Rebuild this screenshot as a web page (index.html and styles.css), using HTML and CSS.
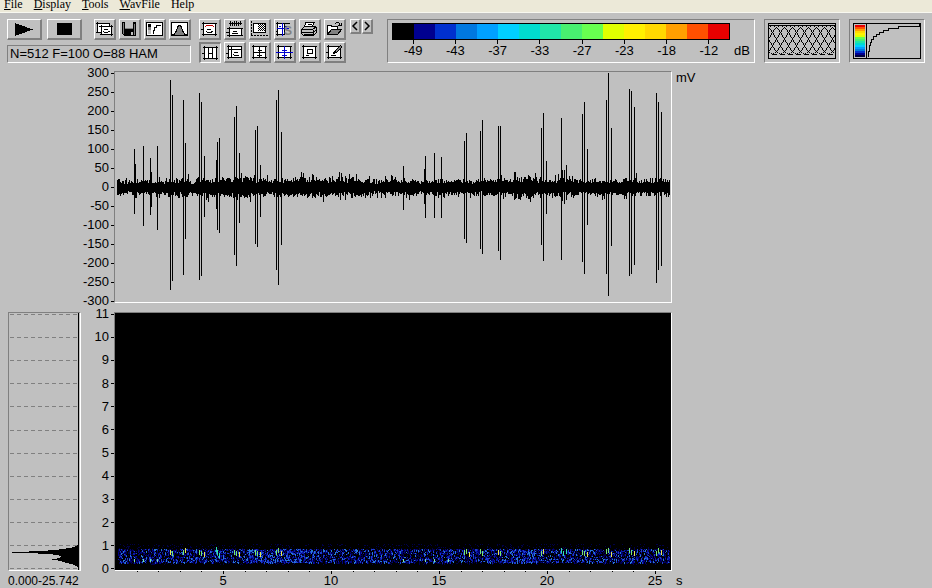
FILE: index.html
```html
<!DOCTYPE html>
<html lang="en">
<head>
<meta charset="utf-8">
<title>Spectrogram</title>
<link rel="stylesheet" href="styles.css">
</head>
<body>
<nav class="menu">
  <button type="button"><u>F</u>ile</button>
  <button type="button"><u>D</u>isplay</button>
  <button type="button"><u>T</u>ools</button>
  <button type="button"><u>W</u>avFile</button>
  <button type="button">Help</button>
</nav>

<header class="toolbar">
  <div class="transport">
    <div class="row">
      <button type="button" class="btn wide" aria-label="Play"><svg width="20" height="13" viewBox="0 0 20 13"><path d="M1 0L19 6.5L1 13z"/></svg></button>
      <button type="button" class="btn wide stop" aria-label="Stop"><svg width="15" height="12" viewBox="0 0 15 12"><path d="M0 0h15v12H0z"/></svg></button>
      <button type="button" class="btn" aria-label="Copy"><svg class="ic" viewBox="0 0 17 16"><path class="w" d="M1.500 2.500h12v9h-12z"/><path class="l" d="M0 2.500h14M1.500 1v11M0 11.500h5M13.500 2v3"/><path class="w" d="M5.500 5.500h10v8h-10z"/><path class="l" d="M3 5.500h14M5.500 4v10M4 13.500h13M15.500 4v11M8 8.500h4M7 10.500h1M12 10.500h2M8 11.500h4"/></svg></button>
      <button type="button" class="btn" aria-label="Save"><svg class="ic" viewBox="0 0 17 16"><path d="M1 1h14v14H3l-2-2z"/><path fill="#808080" d="M2 2h1v11H2zM13 3h1v11h-1z"/><path fill="#c0c0c0" d="M4 1h8v7H4zM10 11h2v3h-2z"/><path fill="#808080" d="M4 7h8v1H4z"/></svg></button>
      <button type="button" class="btn" aria-label="Transfer curve"><svg class="ic" viewBox="0 0 17 16"><path class="w" d="M.5 1.500h16v13H.5z"/><path d="M2 3h3v3H2z"/><path fill="#808080" d="M2 6h3v3H2z"/><path fill="#c0c0c0" d="M2 9h3v4H2z"/><path class="l" d="M7.500 13V9.500h1v-3h2v-2h4"/></svg></button>
      <button type="button" class="btn" aria-label="Window function"><svg class="ic" viewBox="0 0 17 16"><path class="w" d="M.5 1.500h16v13H.5z"/><path fill="#808080" stroke="#000" d="M1 13.500h2l2-3l2-5l1-1h1l1 1l2 5l2 3h2"/></svg></button>
    </div>
    <output class="status">N=512 F=100 O=88 HAM</output>
  </div>

  <div class="views">
    <button type="button" class="btn" aria-label="Spectrogram"><svg class="ic" viewBox="0 0 17 16"><path class="w" d="M2.500 2.500h12v11h-12z"/><path class="l" d="M1 2.500h15M2.500 1v14M1 13.500h15M14.500 2v13M0 8.500h2M6 8.500h4M5 10.500h1M10 10.500h2M6 11.500h5"/><path stroke="#c00000" d="M5 4.500h7M4 5.500h1M12 5.500h1"/></svg></button>
    <button type="button" class="btn" aria-label="Waveform and spectrogram"><svg class="ic" viewBox="0 0 17 16"><path class="l" d="M3 2.500h13M4.500 0v5M6.500 1v4M8.500 0v5M10.500 0v5M12.500 1v4M14.500 0v4"/><path class="w" d="M3.500 7.500h12v7h-12z"/><path class="l" d="M1 7.500h16M1 14.500h16M3.500 6v10M7 10.500h4M6 12.500h6M0 11.500h3"/></svg></button>
    <button type="button" class="btn" aria-label="Selection"><svg class="ic" viewBox="0 0 17 16"><path fill="#fff" d="M3 2h11v9H3z"/><path class="l" stroke-dasharray="1 1" d="M7 3.500h7M8 4.500h6M7 5.500h7M8 6.500h6M7 7.500h7M8 8.500h6M7 9.500h7"/><path class="l" stroke-dasharray="2 1" d="M.5 0v15M0 14.500h17"/><path class="l" d="M2.500 2.500h12v9h-12z"/></svg></button>
    <button type="button" class="btn" aria-label="Cursor spectrum"><svg class="ic" viewBox="0 0 17 16"><path class="w" d="M1.500 2.500h7v11h-7z"/><path class="l" d="M0 2.500h14M1.500 1v14M0 13.500h9M0 10.500h2"/><path stroke="#0000d0" d="M1 7.500h12M6.500 2v13M3 5.500h2M9 5.500h2"/><text x="8" y="14" class="s">S</text></svg></button>
    <button type="button" class="btn" aria-label="Print"><svg class="ic" viewBox="0 0 17 16"><path class="w" d="M5 1.500h8l-2 5H3z"/><path class="l" d="M7 3.500h4M6 5.500h4"/><path fill="#c0c0c0" stroke="#000" d="M.5 8.500l3-3h11l1 1v5l-3 3h-10l-2-2z"/><path class="l" d="M.5 8.500h11l4-3M12.500 9v5M1 11.500h11l4-3M3 13.500h9"/></svg></button>
    <button type="button" class="btn" aria-label="Open"><svg class="ic" viewBox="0 0 17 16"><path class="w" d="M1 13.500v-8l1-1h3l1 1h5v3"/><path fill="#808080" stroke="#000" d="M1.500 13.500l4-5h10l-4 5z"/><path class="l" d="M9 2.500h1M10 1.500h3M13.500 2v2M12 4.500h4M15.500 2v3"/></svg></button>
    <button type="button" class="btn pressed" aria-label="Time grid" aria-pressed="true"><svg class="ic" viewBox="0 0 17 16"><path class="w" d="M2.500 2.500h12v11h-12z"/><path class="l" d="M1 2.500h15M2.500 1v14M1 13.500h15M14.500 1v14M6.500 2v12M10.500 2v12M0 8.500h2M7 8.500h3"/></svg></button>
    <button type="button" class="btn" aria-label="Frequency grid"><svg class="ic" viewBox="0 0 17 16"><path class="w" d="M2.500 2.500h13v11h-13z"/><path class="l" d="M1 2.500h15M2.500 1v14M1 13.500h15M5.500 2v12M2 5.500h13M0 9.500h2M8 8.500h4M7 10.500h1M8 11.500h5"/></svg></button>
    <button type="button" class="btn" aria-label="Crosshair"><svg class="ic" viewBox="0 0 17 16"><path class="w" d="M2.500 2.500h12v11h-12z"/><path class="l" d="M1 2.500h15M2.500 1v14M1 13.500h15M14.500 2v13M2 8.500h12M8.500 2v12M7 6.500h4M6 11.500h5"/></svg></button>
    <button type="button" class="btn" aria-label="Measuring crosshair"><svg class="ic" viewBox="0 0 17 16"><path class="w" d="M2.500 2.500h12v11h-12z"/><path class="l" d="M1 2.500h15M2.500 1v14M1 13.500h15M14.500 2v13"/><path stroke="#0000d0" d="M0 8.500h17M8.500 2v13M6 6.500h5M6 11.500h5"/></svg></button>
    <button type="button" class="btn" aria-label="Zoom area"><svg class="ic" viewBox="0 0 17 16"><path class="w" d="M2.500 2.500h12v11h-12z"/><path class="l" d="M1 2.500h15M2.500 1v14M1 13.500h15M14.500 2v13M6.500 5.500h5v4h-5zM5 11.500h3"/></svg></button>
    <button type="button" class="btn" aria-label="Annotate"><svg class="ic" viewBox="0 0 17 16"><path class="w" d="M2.500 2.500h12v11h-12z"/><path class="l" d="M1 2.500h15M2.500 1v14M1 13.500h15M14.500 2v13M0 8.500h2M5 11.500h5"/><path d="M7 10l1-3l6-6l2 2l-6 6z"/><path fill="#808080" d="M9 7l5-5l1 1l-5 5z"/></svg></button>
  </div>

  <div class="steps">
    <button type="button" class="btn step" aria-label="Previous"><svg width="8" height="12" viewBox="0 0 8 12"><path class="c" d="M6 2L2 6l4 4"/></svg></button>
    <button type="button" class="btn step" aria-label="Next"><svg width="8" height="12" viewBox="0 0 8 12"><path class="c" d="M2 2l4 4l-4 4"/></svg></button>
  </div>

  <section class="sunk legend" aria-label="Level scale">
    <div class="scale" id="scale"></div>
    <div class="levels"><span>-49</span><span>-43</span><span>-37</span><span>-33</span><span>-27</span><span>-23</span><span>-18</span><span>-12</span></div>
    <span class="db">dB</span>
  </section>

  <div class="sunk mini"><svg viewBox="0 0 68 36" id="bank"><path class="l" d="M.5 .5h67v35H.5zM1 2.500h66"/></svg></div>
  <div class="sunk mini"><svg viewBox="0 0 68 36" id="curve"><path class="l" d="M.5 .5h67v35H.5zM13.500 1v35"/><path class="l" d="M15.500 34v-6h1v-6h1v-3h1v-3h2v-3h3v-2h3v-2h4v-2h5v-2h10v-2h21v-2"/></svg></div>
</header>

<main class="charts">
  <div class="axis wave-axis"><span>300</span><span>250</span><span>200</span><span>150</span><span>100</span><span>50</span><span>0</span><span>-50</span><span>-100</span><span>-150</span><span>-200</span><span>-250</span><span>-300</span></div>
  <div class="sunk plot wave"><svg id="wave" viewBox="0 0 556 230" preserveAspectRatio="none"></svg></div>
  <span class="unit">mV</span>

  <div class="sunk plot spectrum"><svg id="spectrum" viewBox="0 0 71 257" preserveAspectRatio="none"></svg></div>
  <div class="axis spec-axis"><span>11</span><span>10</span><span>9</span><span>8</span><span>7</span><span>6</span><span>5</span><span>4</span><span>3</span><span>2</span><span>1</span><span>0</span></div>
  <div class="sunk plot spec"><svg id="spec" viewBox="0 0 556 257" preserveAspectRatio="none"></svg></div>

  <span class="range">0.000-25.742</span>
  <div class="time">
    <svg id="ticks" viewBox="0 0 556 4" preserveAspectRatio="none"></svg>
    <div class="seconds"><span>5</span><span>10</span><span>15</span><span>20</span><span>25</span></div>
  </div>
  <span class="sec">s</span>
</main>
<script src="script.js"></script>
</body>
</html>
```

FILE: styles.css
```css
* { box-sizing: border-box; }

body {
  display: flex;
  flex-direction: column;
  min-height: 100vh;
  margin: 0;
  overflow: hidden;
  background: #c0c0c0;
  color: #000;
  font: 13px/14px "Liberation Sans", Arial, sans-serif;
}

button {
  padding: 0;
  border: 0;
  background: none;
  color: inherit;
  font: inherit;
}

svg {
  display: block;
  fill: #000;
  shape-rendering: crispEdges;
}

.menu {
  display: flex;
  align-items: flex-end;
  gap: 11px;
  height: 13px;
  padding: 0 4px 1px;
  border-bottom: 1px solid #f8f8f0;
  background: #ece9d8;
  font: 12px/14px "Liberation Serif", "Times New Roman", serif;
}

.toolbar {
  display: flex;
  height: 50px;
  padding: 6px 7px 0;
}

.transport {
  display: flex;
  flex-direction: column;
  justify-content: space-between;
}

.row { display: flex; gap: 3px; }

.btn {
  display: flex;
  flex: none;
  align-items: center;
  justify-content: center;
  width: 22px;
  height: 21px;
  border: solid;
  border-width: 1px 2px 2px 1px;
  border-color: #fff #808080 #808080 #fff;
  background: #c0c0c0;
}

.pressed {
  border-width: 2px 1px 1px 2px;
  border-color: #808080 #fff #fff #808080;
}

.wide { width: 35px; margin-right: 2px; }
.stop { margin-right: 9px; }
.ic { flex: none; width: 17px; height: 16px; }

.l, .c { fill: none; stroke: #000; }
.w { fill: #fff; stroke: #000; }
.c { stroke-width: 1.5; shape-rendering: auto; }
.s { fill: #808080; font: bold 12px "Liberation Sans", Arial, sans-serif; }

.status {
  height: 18px;
  padding: 1px 2px;
  border: 1px solid;
  border-color: #808080 #fff #fff #808080;
}

.views {
  display: grid;
  grid-template-columns: repeat(6, 22px);
  gap: 2px 3px;
  margin-left: 8px;
}

.steps { display: flex; gap: 1px; margin: 0 14px 0 4px; }
.step { width: 11px; height: 15px; }

.sunk {
  border: 1px solid;
  border-color: #808080 #fff #fff #808080;
}

.legend {
  display: grid;
  flex: 1;
  grid-template-columns: 1fr 24px;
  grid-template-rows: 17px 1fr;
  padding: 3px 0 0 4px;
}

.scale { display: flex; border: 1px solid #000; }
.scale i { flex: 1; }

.levels {
  display: flex;
  grid-row: 2;
}

.levels span {
  display: flex;
  flex: 1;
  flex-direction: column;
  align-items: center;
}

.levels span::before {
  width: 1px;
  height: 4px;
  background: #000;
  content: "";
}

.db { grid-row: 2; grid-column: 2; padding: 4px 0 0 4px; }

.mini { width: 76px; margin-left: 9px; padding: 3px; }

.charts {
  display: grid;
  flex: 1;
  grid-template-columns: 73px 33px 1fr 260px;
  grid-template-rows: 232fr 9px 259fr 17px;
  margin-top: 8px;
  padding-left: 8px;
}

.plot { min-height: 0; }
.plot svg { width: 100%; height: 100%; }

.axis {
  display: flex;
  grid-column: 2;
  flex-direction: column;
  justify-content: space-between;
  min-height: 0;
  margin: -4px 0;
  line-height: 12px;
}

.axis span {
  display: flex;
  align-items: center;
  justify-content: flex-end;
}

.axis span::after {
  width: 3px;
  height: 1px;
  margin-left: 2px;
  background: #000;
  content: "";
}

.wave-axis, .wave, .unit { grid-row: 1; }
.spectrum, .spec-axis, .spec { grid-row: 3; }
.wave, .spec, .time { grid-column: 3; }
.spectrum, .range { grid-column: 1; }
.spec { background: #000; }
.unit, .sec { grid-column: 4; padding-left: 4px; }

.range, .time, .sec { grid-row: 4; }
.range { font-size: 12px; }
.range, .sec { padding-top: 3px; }
.time { padding: 0 1px; }
.time svg { width: 100%; height: 4px; margin-bottom: -1px; }

.seconds {
  display: flex;
  width: 106.83%;
}

.seconds::before { flex: 1; content: ""; }
.seconds span { flex: 2; text-align: center; }
```

FILE: script.js
```js
const NS = "http://www.w3.org/2000/svg";

function add(id, name, attrs) {
  const node = document.createElementNS(NS, name);
  for (const key in attrs) node.setAttribute(key, attrs[key]);
  document.getElementById(id).appendChild(node);
}

let seed = 90210;
function rand() {
  seed = (seed + 0x6d2b79f5) | 0;
  let t = Math.imul(seed ^ (seed >>> 15), 1 | seed);
  t = (t + Math.imul(t ^ (t >>> 7), 61 | t)) ^ t;
  return ((t ^ (t >>> 14)) >>> 0) / 4294967296;
}

const colours = ["#000", "#00008f", "#0030cf", "#0078e0", "#00a0ff", "#00d0ff", "#00dccf", "#20e6a8",
  "#48f070", "#68ff50", "#e0ff00", "#fff000", "#ffd800", "#ff9f00", "#ff5000", "#e80000"];
for (const colour of colours) {
  const cell = document.createElement("i");
  cell.style.background = colour;
  document.getElementById("scale").appendChild(cell);
}
colours.slice(1).reverse().forEach((fill, i) => {
  add("curve", "rect", { x: 2, y: 2 + i * 2, width: 10, height: 2, fill });
});
add("curve", "rect", { x: 2, y: 32, width: 10, height: 2, fill: "#000040" });

// Overlapping analysis windows
let bank = "";
for (let i = -4; i < 12; i++) {
  for (let y = 3; y < 31; y++) {
    const dx = Math.round(25 * Math.acos(1 - 2 * (y - 2.5) / 28) / Math.PI);
    for (const x of [4 + i * 8 + dx, 4 + i * 8 - dx]) {
      if (x > 0 && x < 67) bank += `M${x} ${y}h1v1h-1z`;
    }
  }
}
for (let x = 4; x < 64; x += 8) bank += `M${x} 31h5v1h-5z`;
add("bank", "path", { d: bank });

// Spikes: x, top and bottom
const spikes = [[19,77,142],[20,92,126],[28,74,154],[35,86,143],[36,100,135],[42,74,158],[55,8,218],
[57,23,209],[68,28,203],[70,71,167],[84,21,208],[86,30,204],[89,84,145],[101,88,137],[102,70,158],
[104,66,161],[119,45,183],[121,34,194],[124,81,151],[140,58,172],[142,54,175],[145,93,145],[161,28,198],
[163,18,213],[166,60,173],[288,94,138],[309,97,132],[310,84,146],[319,81,146],[326,85,146],[349,69,167],
[351,61,171],[365,59,177],[367,48,182],[383,54,179],[385,54,188],[426,56,173],[428,41,189],[431,89,142],
[446,46,188],[447,98,129],[449,98,132],[451,93,128],[467,42,190],[469,30,202],[472,77,153],[491,28,202],
[493,1,224],[496,56,174],[514,17,204],[516,19,202],[519,35,193],[541,21,211],[543,30,198],[546,40,194]];
let wave = "";
let drift = 0.5;
for (let x = 2; x < 555; x++) {
  drift += (rand() - 0.5) * 0.35;
  drift = Math.min(1, Math.max(0, drift));
  let gain = 0.85 + drift * 0.3;
  if (x > 52 && x < 260) gain *= 1.12;
  if (x > 398 && x < 422) gain *= 1.4;
  if (x > 73 && x < 81) gain *= 0.6;
  const up = Math.round((3.5 + rand() * 4.5 + (rand() > 0.82 ? rand() * 5 : 0)) * gain);
  const down = Math.round((3.5 + rand() * 4.5 + (rand() > 0.82 ? rand() * 5 : 0)) * gain);
  wave += `M${x} ${115 - up}h1V${116 + down}h-1z`;
}
for (const [x, top, bottom] of spikes) wave += `M${x} ${top}h1V${bottom}h-1z`;
add("wave", "path", { d: wave });

// Average spectrum with its frequency grid
for (let i = 0; i < 12; i++) {
  add("spectrum", "path", { d: `M1 ${Math.round(1 + i * 23.1) + 0.5}h69`, stroke: "#808080", "stroke-dasharray": "4 3" });
}
add("spectrum", "path", { d: "M69 0h1v257h-1z" });
const profile = [1, 2, 4, 7, 13, 20, 31, 50, 67, 41, 26, 20, 18, 19, 22, 27, 21, 17, 14, 10, 6, 4, 2, 1];
profile.forEach((width, i) => {
  add("spectrum", "rect", { x: 70 - width, y: 231 + i, width, height: 1 });
});

// Spectrogram band
const shades = ["#000048", "#00007c", "#0c18a8", "#1c3cd0", "#2878d8"];
const dots = shades.map(() => "");
for (let x = 3; x < 555; x++) {
  const busy = x > 395 && x < 422;
  const strong = busy || (x > 130 && x < 200);
  for (let y = 231; y < 252; y++) {
    const core = y > 235 && y < 250;
    const gap = y > 240 && y < 244;
    let chance = core ? (gap ? 0.38 : 0.55) : 0.1;
    if (strong && core) chance += 0.15;
    if (rand() < chance) {
      const level = core ? Math.floor(Math.pow(rand(), strong ? 1.1 : 1.7) * 5) : 0;
      const tall = rand() > 0.6 && core ? 2 : 1;
      dots[level] += `M${x} ${y}h1v${tall}h-1z`;
    }
  }
}
shades.forEach((fill, i) => add("spec", "path", { d: dots[i], fill }));

const calls = [[55,237],[57,238],[68,237],[70,235],[84,237],[86,238],[89,239],[101,234],[102,237],[104,240],
[119,237],[121,238],[124,239],[140,237],[142,238],[145,239],[161,237],[163,235],[166,238],[349,237],[351,236],
[354,239],[365,236],[367,238],[383,237],[385,238],[426,238],[428,236],[446,235],[448,238],[451,236],[467,237],
[469,238],[472,239],[491,236],[493,235],[496,239],[514,235],[516,237],[519,238],[541,238],[543,235],[546,237]];
calls.forEach(([x, y], i) => {
  const cyan = (x > 100 && x < 105) || (x > 445 && x < 452);
  add("spec", "rect", { x, y, width: 1, height: 5, fill: cyan ? "#30e0b0" : i % 3 ? "#78e870" : "#e8e850" });
});
for (const x of [19, 28, 35, 42, 288, 310, 319, 333]) {
  add("spec", "rect", { x, y: 246, width: 1, height: 3, fill: "#80e8a0" });
}

let ticks = "";
for (let s = 1; s <= 25; s++) {
  ticks += `M${Math.round(s * 556 / 25.742)} 0h1v${s % 5 ? 1 : 3}h-1z`;
}
add("ticks", "path", { d: ticks });
```
